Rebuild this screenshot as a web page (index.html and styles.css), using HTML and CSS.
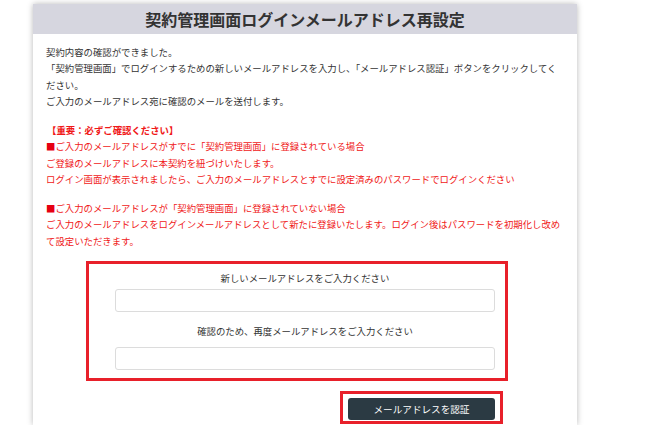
FILE: index.html
```html
<!DOCTYPE html>
<html lang="ja">
<head>
<meta charset="utf-8">
<title>契約管理画面ログインメールアドレス再設定</title>
<link rel="stylesheet" href="styles.css">
</head>
<body>
<div class="card">
  <div class="card-header">契約管理画面ログインメールアドレス再設定</div>
  <div class="card-body">
    <div class="group">
      <p>契約内容の確認ができました。</p>
      <p>「契約管理画面」でログインするための新しいメールアドレスを入力し、「メールアドレス認証」ボタンをクリックしてく<br>ださい。</p>
      <p>ご入力のメールアドレス宛に確認のメールを送付します。</p>
    </div>
    <div class="group warn">
      <p class="warn-title">【重要：必ずご確認ください】</p>
      <p><span class="bullet">■</span>ご入力のメールアドレスがすでに「契約管理画面」に登録されている場合</p>
      <p>ご登録のメールアドレスに本契約を紐づけいたします。</p>
      <p>ログイン画面が表示されましたら、ご入力のメールアドレスとすでに設定済みのパスワードでログインください</p>
    </div>
    <div class="group warn">
      <p><span class="bullet">■</span>ご入力のメールアドレスが「契約管理画面」に登録されていない場合</p>
      <p>ご入力のメールアドレスをログインメールアドレスとして新たに登録いたします。ログイン後はパスワードを初期化し改め<br>て設定いただきます。</p>
    </div>
    <form class="form">
      <div class="fields">
        <span class="mark mark-fields"></span>
        <label class="label label-first" for="mail1">新しいメールアドレスをご入力ください</label>
        <input class="input" id="mail1" type="email">
        <label class="label label-second" for="mail2">確認のため、再度メールアドレスをご入力ください</label>
        <input class="input input-second" id="mail2" type="email">
      </div>
      <div class="actions">
        <div class="btn-wrap">
          <span class="mark mark-btn"></span>
          <button class="btn" type="button">メールアドレスを認証</button>
        </div>
      </div>
    </form>
  </div>
</div>
</body>
</html>
```
FILE: styles.css
```css
html, body {
  margin: 0;
  padding: 0;
  background: #ffffff;
}
body {
  font-family: "Noto Sans CJK JP", "Noto Sans", sans-serif;
  color: #333333;
}
.card {
  margin: 4px 0 0 33px;
  width: 544px;
  height: 421px;
  background: #ffffff;
  box-shadow: 0 0 6px rgba(0, 0, 0, 0.28);
}
.card-header {
  height: 30px;
  background: #d6d6df;
  display: flex;
  align-items: center;
  justify-content: center;
  font-size: 16px;
  font-weight: bold;
  color: #333333;
}
.card-body {
  padding: 10px 13px 0 13px;
  font-size: 9.4px;
}
.group p {
  margin: 0;
  line-height: 16.4px;
  white-space: nowrap;
}
.group + .group {
  margin-top: 12.4px;
}
.warn {
  color: #f01818;
}
.warn-title {
  font-weight: bold;
  padding-left: 1px;
}
.bullet {
  color: #e60012;
}
.form {
  width: 380px;
  margin: 21px auto 0;
}
.fields {
  position: relative;
  display: flex;
  flex-direction: column;
}
.label {
  display: block;
  text-align: center;
  line-height: 16.4px;
  color: #333333;
}
.label-first {
  margin-bottom: 2px;
}
.label-second {
  margin-top: 11px;
  margin-bottom: 8px;
}
.input {
  box-sizing: border-box;
  height: 23px;
  width: 100%;
  margin: 0;
  border: 1px solid #dcdcdc;
  border-radius: 3px;
  background: #ffffff;
}
.actions {
  display: flex;
  justify-content: flex-end;
  margin-top: 28px;
}
.btn-wrap {
  position: relative;
}
.btn {
  width: 147px;
  height: 22px;
  border: none;
  border-radius: 3px;
  background: #2b3a43;
  color: #ffffff;
  font-family: "Noto Sans CJK JP", "Noto Sans", sans-serif;
  font-size: 9.6px;
  padding: 0;
  display: block;
}
.mark {
  position: absolute;
  box-sizing: border-box;
  border: 3px solid #e8202a;
  pointer-events: none;
}
.mark-fields {
  left: -29px;
  top: -9px;
  width: 422px;
  height: 120px;
}
.mark-btn {
  left: -8px;
  top: -7px;
  width: 163px;
  height: 33px;
}
```
